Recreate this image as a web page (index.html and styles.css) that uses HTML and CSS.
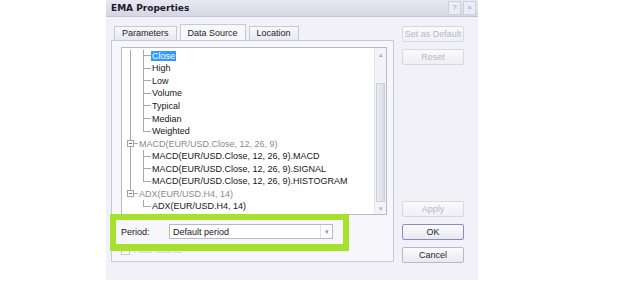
FILE: index.html
```html
<!DOCTYPE html>
<html lang="en">
<head>
  <meta charset="UTF-8">
  <title>EMA Properties</title>
  <link rel="stylesheet" href="styles.css">
</head>
<body>
  <div class="window">
    <div class="titlebar">
      <span class="title">EMA Properties</span>
      <span class="tb-btns">
        <span class="tb-btn">?</span>
        <span class="tb-btn">×</span>
      </span>
    </div>

    <div class="content">
      <div class="left">
        <div class="tabs">
          <span class="tab">Parameters</span>
          <span class="tab active">Data Source</span>
          <span class="tab">Location</span>
        </div>

        <div class="panel">
          <div class="tree">
            <div class="rows">
              <div class="row"><span class="c1 v"></span><span class="c2 v t"></span><span class="lbl sel">Close</span></div>
              <div class="row"><span class="c1 v"></span><span class="c2 v t"></span><span class="lbl">High</span></div>
              <div class="row"><span class="c1 v"></span><span class="c2 v t"></span><span class="lbl">Low</span></div>
              <div class="row"><span class="c1 v"></span><span class="c2 v t"></span><span class="lbl">Volume</span></div>
              <div class="row"><span class="c1 v"></span><span class="c2 v t"></span><span class="lbl">Typical</span></div>
              <div class="row"><span class="c1 v"></span><span class="c2 v t"></span><span class="lbl">Median</span></div>
              <div class="row"><span class="c1 v"></span><span class="c2 h t"></span><span class="lbl">Weighted</span></div>

              <div class="row"><span class="p1 v t"><span class="box"></span></span><span class="lbl parent">MACD(EUR/USD.Close, 12, 26, 9)</span></div>
              <div class="row"><span class="c1 v"></span><span class="c2 v t"></span><span class="lbl">MACD(EUR/USD.Close, 12, 26, 9).MACD</span></div>
              <div class="row"><span class="c1 v"></span><span class="c2 v t"></span><span class="lbl">MACD(EUR/USD.Close, 12, 26, 9).SIGNAL</span></div>
              <div class="row"><span class="c1 v"></span><span class="c2 h t"></span><span class="lbl">MACD(EUR/USD.Close, 12, 26, 9).HISTOGRAM</span></div>

              <div class="row"><span class="p1 h t"><span class="box"></span></span><span class="lbl parent">ADX(EUR/USD.H4, 14)</span></div>
              <div class="row"><span class="c1"></span><span class="c2 h t"></span><span class="lbl">ADX(EUR/USD.H4, 14)</span></div>
            </div>
            <div class="scrollbar">
              <span class="arrow">▴</span>
              <span class="track"><span class="thumb"></span></span>
              <span class="arrow">▾</span>
            </div>
          </div>

          <div class="period">
            <span class="period-label">Period:</span>
            <span class="select">
              <span class="select-value">Default period</span>
              <span class="select-btn">▾</span>
            </span>
          </div>

          <div class="check">
            <span class="checkbox"></span>
            <span class="check-label">Auto source</span>
          </div>

          <div class="highlight"></div>
        </div>
      </div>

      <div class="right">
        <div class="btn-group">
          <span class="btn disabled">Set as Default</span>
          <span class="btn disabled">Reset</span>
        </div>
        <div class="btn-group">
          <span class="btn disabled">Apply</span>
          <span class="btn default">OK</span>
          <span class="btn">Cancel</span>
        </div>
      </div>
    </div>
  </div>
</body>
</html>
```

FILE: styles.css
```css
body {
  margin: 0;
  background: #fff;
  font-family: "Liberation Sans", Arial, sans-serif;
  font-size: 9px;
  color: #1c1418;
}
.window {
  margin-left: 106px;
  width: 372px;
  height: 280px;
  background: #f1f1f7;
  display: flex;
  flex-direction: column;
}
.titlebar {
  height: 17px;
  flex: none;
  display: flex;
  align-items: center;
  justify-content: space-between;
  padding: 0 2px 0 5px;
  background: linear-gradient(#e8e8f2, #d6d6e4);
  border-bottom: 1px solid #c4c4d8;
  box-sizing: border-box;
}
.title {
  font-family: "DejaVu Sans", Verdana, sans-serif;
  font-weight: bold;
  color: #1a1a2a;
  font-size: 9px;
}
.tb-btns {
  display: flex;
  gap: 2px;
}
.tb-btn {
  width: 11px;
  height: 12px;
  border: 1px solid #d0d0dc;
  background: #ececf4;
  color: #a0a0b0;
  font-size: 8px;
  line-height: 12px;
  text-align: center;
}
.content {
  flex: 1;
  display: flex;
  padding: 7px 0 0 5px;
}
.left {
  display: flex;
  flex-direction: column;
}
.tabs {
  display: flex;
  align-items: flex-end;
  gap: 3px;
  height: 16px;
  padding-left: 3px;
}
.tab {
  height: 13px;
  line-height: 13px;
  padding: 0 7px;
  border: 1px solid #c8c8d8;
  border-bottom: none;
  background: linear-gradient(#f8f8fc, #e8e8f0);
  color: #1c1c2c;
}
.tab.active {
  height: 16px;
  line-height: 17px;
  background: #f8f8fb;
  margin-bottom: -1px;
  position: relative;
}
.panel {
  position: relative;
  width: 283px;
  height: 222px;
  box-sizing: border-box;
  border: 1px solid #c8c8d8;
  background: #f7f7fb;
  padding: 6px 6px 0 9px;
}
.tree {
  height: 168px;
  box-sizing: border-box;
  border: 1px solid #b8b8cc;
  background: #fff;
  display: flex;
}
.rows {
  flex: 1;
  padding-top: 1.5px;
}
.row {
  display: flex;
  height: 12.55px;
  align-items: stretch;
  padding-left: 8px;
  white-space: nowrap;
}
.c1, .c2, .p1 {
  flex: none;
  background-repeat: no-repeat;
}
.c1 { width: 13px; }
.c2 { width: 8px; }
.p1 {
  width: 8px;
  display: flex;
  align-items: center;
}
.v { background-image: linear-gradient(#a8a8a8, #a8a8a8); background-size: 1px 100%; }
.h { background-image: linear-gradient(#a8a8a8, #a8a8a8); background-size: 1px 50%; }
.t.v, .t.h {
  background-image: linear-gradient(#a8a8a8, #a8a8a8), linear-gradient(#a8a8a8, #a8a8a8);
  background-position: 0 0, 0 50%;
}
.t.v { background-size: 1px 100%, 100% 1px; }
.t.h { background-size: 1px 50%, 100% 1px; }
.box {
  width: 5px;
  height: 5px;
  margin-left: -3px;
  border: 1px solid #a0a0a8;
  background: linear-gradient(#707070, #707070) center/3px 1px no-repeat, #fff;
}
.lbl {
  align-self: center;
  line-height: 10px;
  padding: 0 1px;
}
.lbl.sel {
  background: #3399ff;
  color: #fff;
}
.lbl.parent {
  color: #8a8a8a;
}
.scrollbar {
  width: 11px;
  flex: none;
  display: flex;
  flex-direction: column;
  border-left: 1px solid #e4e4ec;
  background: #f4f4f8;
}
.arrow {
  height: 14px;
  line-height: 14px;
  font-size: 7px;
  text-align: center;
  color: #b0b0bc;
}
.track {
  flex: 1;
  display: flex;
  flex-direction: column;
  padding-top: 21px;
}
.thumb {
  height: 117px;
  margin: 0 1px;
  border: 1px solid #cfcfdc;
  background: linear-gradient(90deg, #ececf4, #dcdce8);
}
.period {
  display: flex;
  align-items: center;
  height: 15px;
  margin-top: 9px;
}
.period-label {
  width: 48px;
}
.select {
  width: 164px;
  height: 15px;
  box-sizing: border-box;
  border: 1px solid #b8b8c8;
  background: #fff;
  display: flex;
  align-items: center;
  justify-content: space-between;
  padding-left: 3px;
}
.select-btn {
  width: 11px;
  height: 13px;
  line-height: 13px;
  border-left: 1px solid #e0e0e8;
  text-align: center;
  font-size: 7px;
  color: #909098;
}
.check {
  display: flex;
  align-items: center;
  gap: 4px;
  margin-top: 6px;
  color: #c8c8d4;
}
.checkbox {
  width: 7px;
  height: 7px;
  border: 1px solid #c8c8d4;
  background: #fafafc;
}
.highlight {
  position: absolute;
  left: -2px;
  top: 173px;
  width: 239px;
  height: 37px;
  box-sizing: border-box;
  border: 6px solid #a6e22c;
  border-bottom-width: 7px;
}
.right {
  display: flex;
  flex-direction: column;
  justify-content: space-between;
  margin-left: 8px;
  padding: 2px 0 17px;
}
.btn-group {
  display: flex;
  flex-direction: column;
  gap: 7px;
}
.btn {
  width: 60px;
  height: 14px;
  line-height: 14px;
  text-align: center;
  border: 1px solid #b8b8c8;
  border-radius: 2px;
  background: linear-gradient(#fcfcfe, #e8e8f0);
  color: #1c1c2c;
}
.btn.disabled {
  color: #b8b8c4;
  border-color: #d8d8e2;
  background: linear-gradient(#fafafc, #efeff5);
}
.btn.default {
  border-color: #8c8cbc;
}
```
